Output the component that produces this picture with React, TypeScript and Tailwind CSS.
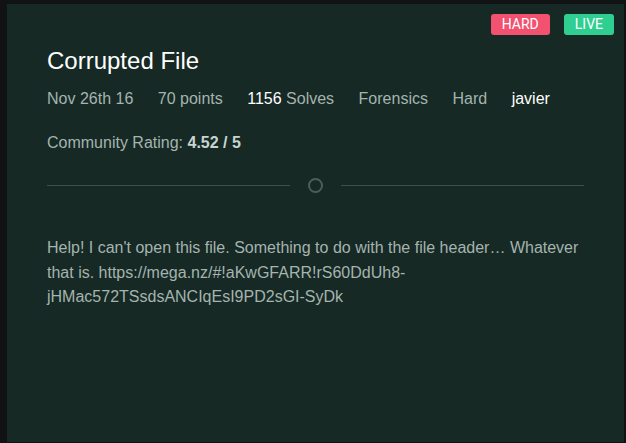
export default function App() {
  const meta = [
    { label: 'Nov 26th 16' },
    { label: '70 points' },
    { strong: '1156', label: ' Solves' },
    { label: 'Forensics' },
    { label: 'Hard' },
    { label: 'javier', bright: true },
  ];

  return (
    <div className="w-[626px] h-[443px] bg-[#111214] pl-[7px] pt-[4px] pr-[2px] pb-[1px] font-['Liberation_Sans',Arial,sans-serif]">
      <div className="relative h-full bg-[#162924] px-[40px] pt-[41px]">
        <div className="absolute top-[10px] right-[10px] flex gap-[14px] font-['Roboto',sans-serif] text-[14px] leading-[21px] text-white">
          <span className="rounded-[3px] bg-[#f2516f] px-[11px]">HARD</span>
          <span className="rounded-[3px] bg-[#2fcf92] px-[11px]">LIVE</span>
        </div>

        <h1 className="text-[24px] leading-[32px] text-white">Corrupted File</h1>

        <div className="mt-[10px] flex gap-[24.5px] text-[16px] leading-[24px] text-[#a4b4af]">
          {meta.map((m, i) => (
            <span key={i} className={m.bright ? 'text-white' : ''}>
              {m.strong && <span className="text-white">{m.strong}</span>}
              {m.label}
            </span>
          ))}
        </div>

        <p className="mt-[21px] text-[16px] leading-[22px] text-[#a4b4af]">
          Community Rating: <b className="text-[#c9d4d1]">4.52 / 5</b>
        </p>

        <div className="mt-[24px] flex items-center">
          <div className="h-px flex-1 bg-[#3b514b]" />
          <div className="mx-[18px] h-[15px] w-[15px] rounded-full border-2 border-[#4a5f59]" />
          <div className="h-px flex-1 bg-[#3b514b]" />
        </div>

        <p className="mt-[43px] text-[16px] leading-[24.5px] text-[#a4b4af] break-words">
          Help! I can't open this file. Something to do with the file header… Whatever that is. https://mega.nz/#!aKwGFARR!rS60DdUh8-jHMac572TSsdsANCIqEsI9PD2sGI-SyDk
        </p>
      </div>
    </div>
  );
}
